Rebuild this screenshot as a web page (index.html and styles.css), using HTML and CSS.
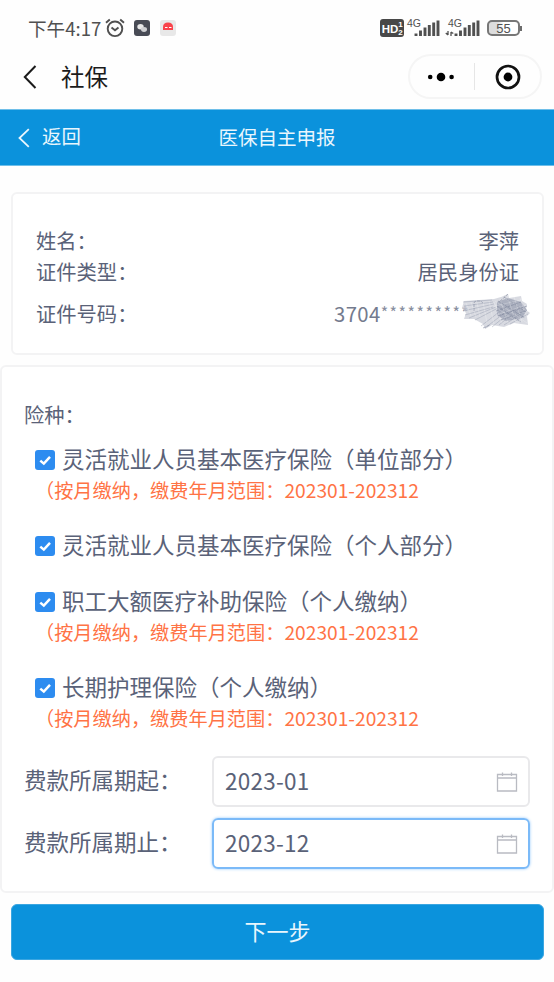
FILE: index.html
```
<!DOCTYPE html>
<html lang="zh-CN">
<head>
<meta charset="utf-8">
<title>医保自主申报</title>
<link rel="stylesheet" href="styles.css">
</head>
<body>
<svg class="defs" width="0" height="0">
  <symbol id="check" viewBox="0 0 20 20"><path d="M5.300 10.600 8.800 13.600 15 6.900" fill="none" stroke="#fff" stroke-width="2.500"/></symbol>
  <symbol id="calendar" viewBox="0 0 22 22"><path d="M1.500 3.500h19v16.500h-19zM1.500 7h19M6.500 1.500v3.500M15.500 1.500v3.500" fill="none" stroke="#b9bbc2" stroke-width="1.300"/></symbol>
  <symbol id="bars" viewBox="0 0 26 18"><path d="M2 14.500v2.500M6.500 11.500v5.500M11 8.500v8.500M15.300 6v11M19.700 3.500v13.500M24 1.500v15.500" fill="none" stroke="#505050" stroke-width="2.900"/></symbol>
</svg>
<div class="status">
  <span class="time">下午4:17</span>
  <svg class="alarm" width="20" height="20" viewBox="0 0 20 20" fill="none" stroke="#505050" stroke-width="1.900"><circle cx="10" cy="10.800" r="7.300"/><path d="M1 4.800 4.800 1.500M19 4.800 15.200 1.500M6.500 9.500 10 12.300 13.500 9.500"/></svg>
  <svg class="app-a" width="16" height="16" viewBox="0 0 16 16"><rect width="16" height="16" rx="3" fill="#484b55"/><ellipse cx="6.500" cy="6.800" rx="3.200" ry="2.700" fill="#e8e8e8"/><ellipse cx="10" cy="9.500" rx="3" ry="2.400" fill="#cfd0d3"/></svg>
  <svg class="app-b" width="16" height="16" viewBox="0 0 16 16"><rect width="16" height="16" rx="3" fill="#e8e8e8"/><path d="M3 10V7q0-4.500 5-4.500T13 7v3z" fill="#f9434b"/><path d="M5 7.500h2.500M9 7.500h2.500" stroke="#fff" stroke-width="1.200"/></svg>
  <div class="signals">
    <svg class="hd" width="24" height="18" viewBox="0 0 24 18"><rect width="24" height="18" rx="3" fill="#484848"/><text x="1.800" y="13.500" class="hd-text">HD</text><text x="18.300" y="8.200" class="hd-num">1</text><text x="18.300" y="16" class="hd-num">2</text></svg>
    <div class="net"><span class="gen">4G</span><svg width="26" height="18"><use href="#bars"/></svg></div>
    <div class="net second"><span class="gen">4G</span><svg class="arrows" width="9" height="5" viewBox="0 0 9 5"><path d="M3 0v4M3 4 .8 2M6 5V1M6 1l2.300 1.500" fill="none" stroke="#505050" stroke-width="1.300"/></svg><svg width="26" height="18"><use href="#bars"/></svg></div>
    <div class="battery"><span>55</span></div>
  </div>
</div>
<div class="nav">
  <svg width="14" height="24" viewBox="0 0 14 24"><path d="M12.500 1 1.800 12 12.500 23" fill="none" stroke="#1b1b1b" stroke-width="2"/></svg>
  <span class="nav-title">社保</span>
  <div class="capsule">
    <svg class="dots" width="28" height="10" viewBox="0 0 28 10"><circle cx="3.200" cy="5" r="2.300"/><circle cx="14" cy="5" r="4.300"/><circle cx="24.600" cy="5" r="2.300"/></svg>
    <i class="divider"></i>
    <svg class="target" width="26" height="26" viewBox="0 0 26 26"><circle cx="13" cy="13" r="11" fill="none" stroke="#111" stroke-width="2.700"/><circle cx="13" cy="13" r="4.400"/></svg>
  </div>
</div>
<header class="bar">
  <a class="back"><svg width="12" height="20" viewBox="0 0 12 20"><path d="M10.800 1.200 1.500 10l9.300 8.800" fill="none" stroke="#e9f6fd" stroke-width="1.800"/></svg><span>返回</span></a>
  <h1>医保自主申报</h1>
</header>
<section class="card person">
  <div class="row"><span>姓名：</span><span>李萍</span></div>
  <div class="row"><span>证件类型：</span><span>居民身份证</span></div>
  <div class="row id-row"><span>证件号码：</span><span class="id-no">3704<span class="stars">**********</span>
    <svg class="scribble" width="70" height="38" viewBox="0 0 70 38">
      <path d="M3 7 33 5 40 3l7-3 1 4 12-2 1 5 5 3-1 6 4 3-3 3 1 9-14-2-10 4-12-2-7 4-2-5-9-5H3l2-6-4-5z" fill="#c9ccd5" opacity=".72"/>
      <path d="M36 8 47 4l13 4 6 8-5 8-16 3-9-6z" fill="#989eb0" opacity=".7"/>
      <path d="M2 8 31 6M3 12l29-4M2 17l31-7M4 21l28-8M8 24l27-11M14 26l23-12M20 32l22-17M24 34l22-17M31 33l22-18M38 31 61 12M43 31 66 16M49 30l18-10" fill="none" stroke="#8d94a7" stroke-width=".8" opacity=".5"/>
      <path d="M5 9 10 22M10 8l5 15M16 9l3 14M22 8l4 21M28 7l5 23M33 8l8 21M39 5l8 24M46 1l9 28M53 3l8 25M59 4l8 22M35 21 68 10M38 25l30-8M34 12l30-7M40 2l25 15M34 7l32 22M33 12l25 17" fill="none" stroke="#fff" stroke-width=".65" opacity=".35"/>
      <path d="M13 17V9q0-2 4-2t5 2M35 17l25-9M37 22l29-10M40 26l24-9M37 7l27 17M43 3l22 15M36 12l24 16M47 0l-9 8M22 34l7-3" fill="none" stroke="#747c93" stroke-width=".9" stroke-dasharray="3 1" opacity=".55"/>
    </svg></span></div>
</section>
<section class="card plans">
  <h2>险种：</h2>
  <div class="plan"><label><svg class="box"><use href="#check"/></svg><span>灵活就业人员基本医疗保险（单位部分）</span></label><p>（按月缴纳，缴费年月范围：202301-202312</p></div>
  <div class="plan"><label><svg class="box"><use href="#check"/></svg><span>灵活就业人员基本医疗保险（个人部分）</span></label></div>
  <div class="plan"><label><svg class="box"><use href="#check"/></svg><span>职工大额医疗补助保险（个人缴纳）</span></label><p>（按月缴纳，缴费年月范围：202301-202312</p></div>
  <div class="plan"><label><svg class="box"><use href="#check"/></svg><span>长期护理保险（个人缴纳）</span></label><p>（按月缴纳，缴费年月范围：202301-202312</p></div>
  <div class="field"><span>费款所属期起：</span><div class="input"><span>2023-01</span><svg width="22" height="22"><use href="#calendar"/></svg></div></div>
  <div class="field"><span>费款所属期止：</span><div class="input focused"><span>2023-12</span><svg width="22" height="22"><use href="#calendar"/></svg></div></div>
</section>
<button class="next">下一步</button>
</body>
</html>
```
FILE: styles.css
```
* { box-sizing: border-box; }
body {
  margin: 0;
  width: 554px;
  height: 982px;
  overflow: hidden;
  background: #fefefe;
  color: #5a6278;
  font-family: "Noto Sans CJK SC", sans-serif;
}
svg { display: block; flex: none; }
h1, h2, p { margin: 0; font-weight: 400; }
.defs { position: absolute; }

.status {
  display: flex;
  align-items: center;
  height: 56px;
  padding: 0 34px 0 28px;
  color: #505050;
}
.time { width: 77px; font-size: 18.6px; line-height: 28px; white-space: nowrap; }
.app-a { margin-left: 9px; }
.app-b { margin-left: 10px; }
.signals { display: flex; align-items: center; margin-left: auto; }
.hd-text { font: bold 11.5px "Liberation Sans", sans-serif; fill: #fff; }
.hd-num { font: bold 8px "Liberation Sans", sans-serif; fill: #fff; }
.net { display: flex; position: relative; width: 33px; height: 18px; margin-left: 3px; justify-content: flex-end; }
.net.second { width: 35px; margin-left: 5px; }
.gen { position: absolute; left: 0; top: -1px; font: 10.5px/11px "Liberation Sans", sans-serif; }
.second .gen { left: 3px; }
.arrows { position: absolute; left: 0; top: 12px; }
.battery {
  position: relative;
  width: 33px;
  height: 16px;
  margin-left: 7px;
  border: 2px solid #777;
  border-radius: 5px;
  background: linear-gradient(90deg, #ddd 30%, #fff 50%);
  font: 13px/13px "Liberation Sans", sans-serif;
  text-align: center;
}
.battery::after {
  content: "";
  position: absolute;
  right: -4px;
  top: 4px;
  width: 2px;
  height: 5px;
  background: #6c6c6c;
}

.nav { display: flex; align-items: center; height: 53px; padding: 0 12px 12px 23px; }
.nav-title { position: relative; top: -1px; margin-left: 24px; font-size: 23.5px; line-height: 34px; color: #1b1b1b; }
.capsule {
  display: flex;
  align-items: center;
  width: 134px;
  height: 45px;
  margin-left: auto;
  padding: 0 17px;
  border: 2px solid #f5f5f5;
  border-radius: 23px;
}
.divider { flex: none; width: 1px; height: 27px; margin: 0 20px 0 19px; background: #e6e6e6; }

.bar {
  display: grid;
  grid-template-columns: 1fr auto 1fr;
  align-items: center;
  height: 57px;
  padding: 0 18px;
  border-top: 1px solid #6fbfe9;
  border-bottom: 1px solid #6fbfe9;
  background: #0b92dc;
  color: #e9f6fd;
  font-size: 19.4px;
}
.back { display: flex; align-items: center; gap: 12px; }
.back span { position: relative; top: -2px; }
.bar h1 { position: relative; top: -1px; font-size: 19.5px; }

.card { border: 2px solid #f3f3f4; border-radius: 6px; background: #fff; }
.person { width: 533px; height: 163px; margin: 26px 0 0 11px; padding: 31px 23px 0; }
.row { display: flex; justify-content: space-between; font-size: 20.3px; line-height: 31px; }
.id-row { margin-top: 11px; }
.id-no { position: relative; width: 185px; white-space: nowrap; letter-spacing: .4px; color: #747b8e; }
.stars { font-size: 16px; letter-spacing: 1.500px; position: relative; top: -3px; opacity: .85; }
.scribble { position: absolute; left: 127px; top: -4px; }

.plans { width: 554px; height: 528px; margin-top: 10px; padding: 32px 22px 0 23px; }
.plans h2 { margin-left: -1px; font-size: 20.3px; line-height: 30px; }
.plan { margin: 24px 0 0 10px; }
h2 + .plan { margin-top: 14px; }
.plan label { display: flex; align-items: center; height: 32px; font-size: 22.5px; white-space: nowrap; }
.plan label span { position: relative; top: -1px; }
.box { position: relative; top: 1px; width: 20px; height: 20px; margin-right: 7px; border-radius: 3px; background: #2d8cf0; }
.plan p { font-size: 19.2px; line-height: 30px; color: #ff7345; }
.field { display: flex; align-items: center; justify-content: space-between; margin: 11px 0 0 -1px; font-size: 22.5px; line-height: 32px; }
.field > span { position: relative; top: -3px; }
.plan + .field { margin-top: 23px; }
.input {
  display: flex;
  align-items: center;
  justify-content: space-between;
  width: 318px;
  height: 51px;
  padding: 0 10px;
  border: 2px solid #e9e9eb;
  border-radius: 6px;
}
.input span { position: relative; left: 1px; top: -2px; letter-spacing: .25px; }
.focused { border-color: #7bbaf8; box-shadow: 0 0 3px #94c8fb; }

.next {
  display: block;
  width: 533px;
  height: 56px;
  margin: 11px 0 0 11px;
  padding: 0 0 4px;
  border: 1px solid #3ba6e1;
  border-radius: 6px;
  background: #0b92dc;
  color: #e9f6fd;
  font: 22px "Noto Sans CJK SC", sans-serif;
}
```
